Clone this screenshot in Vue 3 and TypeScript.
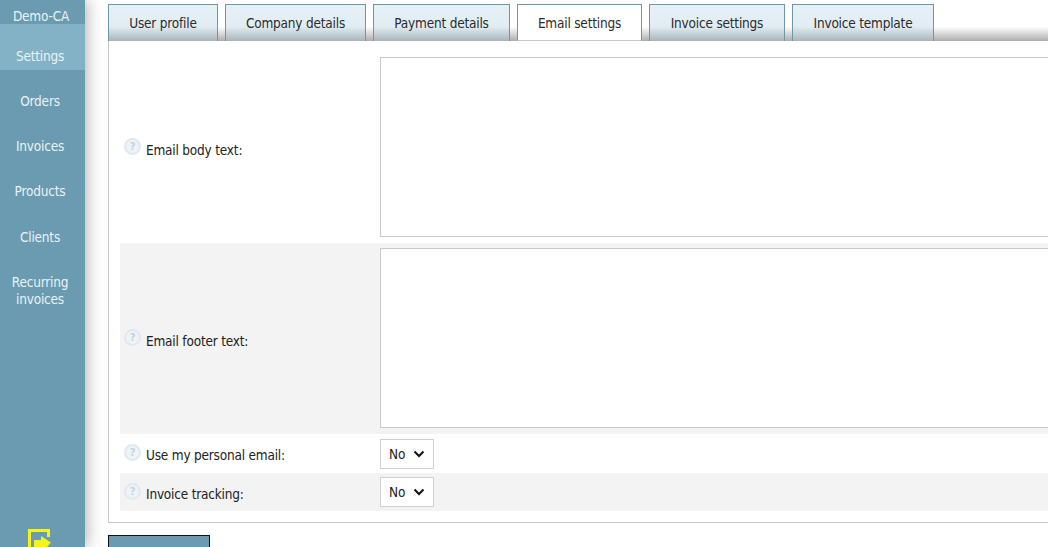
<script setup lang="ts">
interface Tab {
  label: string
  width: number
  active?: boolean
}

const navItems = ['Orders', 'Invoices', 'Products', 'Clients']

const tabs: Tab[] = [
  { label: 'User profile', width: 110 },
  { label: 'Company details', width: 141 },
  { label: 'Payment details', width: 137 },
  { label: 'Email settings', width: 125, active: true },
  { label: 'Invoice settings', width: 136 },
  { label: 'Invoice template', width: 142 }
]
</script>

<template>
  <div class="page">
    <aside class="sidebar">
      <div class="account">Demo-CA</div>
      <a class="nav-item current">Settings</a>
      <a v-for="item in navItems" :key="item" class="nav-item">{{ item }}</a>
      <a class="nav-item double">Recurring<br />invoices</a>
      <div class="logout">
        <svg width="24" height="18" viewBox="0 0 24 18">
          <path d="M1.500 18V1.500H20.500V8" fill="none" stroke="#f4f41c" stroke-width="3" />
          <path d="M6 11h7V7l10 6.500L19 18H6z" fill="#f4f41c" />
        </svg>
      </div>
    </aside>

    <main class="content">
      <div class="tabbar">
        <div
          v-for="tab in tabs"
          :key="tab.label"
          class="tab"
          :class="{ active: tab.active }"
          :style="{ width: tab.width + 'px' }"
        >
          {{ tab.label }}
        </div>
      </div>

      <div class="panel">
        <div class="row tall first">
          <div class="label">
            <span class="help">?</span>
            <span class="label-text">Email body text:</span>
          </div>
          <textarea class="area"></textarea>
        </div>
        <div class="row tall shaded">
          <div class="label">
            <span class="help">?</span>
            <span class="label-text">Email footer text:</span>
          </div>
          <textarea class="area"></textarea>
        </div>
        <div class="row short">
          <div class="label">
            <span class="help">?</span>
            <span class="label-text">Use my personal email:</span>
          </div>
          <div class="select">
            No
            <svg width="12" height="8" viewBox="0 0 12 8">
              <path d="M1.500 1.500 6 6l4.500-4.500" fill="none" stroke="#111" stroke-width="2" />
            </svg>
          </div>
        </div>
        <div class="row short last shaded">
          <div class="label">
            <span class="help">?</span>
            <span class="label-text">Invoice tracking:</span>
          </div>
          <div class="select">
            No
            <svg width="12" height="8" viewBox="0 0 12 8">
              <path d="M1.500 1.500 6 6l4.500-4.500" fill="none" stroke="#111" stroke-width="2" />
            </svg>
          </div>
        </div>
      </div>

      <button class="save" type="button"></button>
    </main>
  </div>
</template>

<style>
html,
body {
  margin: 0;
  overflow: hidden;
  background: #fff;
}
</style>

<style scoped>
.page {
  display: flex;
  width: 1048px;
  height: 547px;
  overflow: hidden;
  font-family: "DejaVu Sans", "Liberation Sans", sans-serif;
  font-stretch: condensed;
  font-size: 13.500px;
  letter-spacing: -0.2px;
}

.sidebar {
  flex: none;
  position: relative;
  display: flex;
  flex-direction: column;
  width: 85px;
  box-sizing: border-box;
  padding-right: 5px;
  background: #6a9bb0;
  color: #e9f2f5;
  text-align: center;
  box-shadow: 3px 0 14px rgba(0, 0, 0, 0.28);
}

.account {
  height: 24px;
  line-height: 32px;
  margin-right: -2px;
}

.nav-item {
  display: block;
  height: 45.200px;
  line-height: 45px;
}

.nav-item.current {
  height: 46px;
  line-height: 64px;
  margin-right: -5px;
  padding-right: 5px;
  background: #83b2c6;
}

.current + .nav-item {
  margin-top: 9px;
}

.nav-item.double {
  height: auto;
  padding-top: 14px;
  line-height: 17px;
}

.logout {
  margin-top: auto;
  height: 18px;
  padding-left: 0;
  overflow: hidden;
}

.content {
  flex: none;
  width: 963px;
  padding-left: 23px;
  box-sizing: border-box;
}

.tabbar {
  display: flex;
  gap: 7px;
  height: 41px;
  padding-top: 4px;
  box-sizing: border-box;
  width: 940px;
  background: linear-gradient(rgba(0, 0, 0, 0) 65%, rgba(0, 0, 0, 0.32) 100%);
}

.tab {
  flex: none;
  box-sizing: border-box;
  height: 37px;
  line-height: 37px;
  text-align: center;
  color: #2b2b2b;
  border: 1px solid #6f97a8;
  border-bottom: 0;
  background: linear-gradient(#e5f1f7 0, #e1edf3 60%, #a8b6bb 100%);
}

.tab.active {
  background: #fff;
  border-bottom: 1px solid #c8c8c8;
}

.panel {
  width: 1000px;
  padding: 0 0 11px 11px;
  border-left: 1px solid #c8c8c8;
  border-bottom: 1px solid #c8c8c8;
  height: 482px;
  box-sizing: border-box;
}

.row {
  display: flex;
  align-items: center;
  color: #222;
}

.row.tall {
  height: 191px;
  padding: 5px 0 6px;
  box-sizing: border-box;
}

.row.tall.first {
  height: 202px;
  padding-top: 16px;
}

.tall .label {
  padding-top: 4px;
}

.tall .help {
  margin-top: -2px;
}

.row.short {
  height: 39px;
}

.row.last {
  height: 38px;
}

.short .label {
  padding-top: 4px;
}

.short .help {
  margin-top: -4px;
}

.short .label-text {
  margin-top: -1px;
}

.shaded {
  background: #f3f3f3;
}

.label {
  display: flex;
  align-items: flex-start;
  flex: none;
  width: 260px;
  padding-left: 4px;
  box-sizing: border-box;
}

.help {
  flex: none;
  width: 13px;
  height: 13px;
  margin: -3px 5px 0 0;
  border: 2px solid #dfe9f0;
  border-radius: 50%;
  background: #eef3f7;
  color: #c3d3de;
  font-size: 11px;
  font-weight: bold;
  line-height: 13px;
  text-align: center;
}

.label-text {
  line-height: 16px;
  margin-top: 2px;
}

.area {
  display: block;
  flex: none;
  width: 700px;
  height: 180px;
  padding: 0;
  box-sizing: border-box;
  border: 1px solid #c8c8c8;
  background: #fff;
  outline: none;
  resize: none;
}

.select {
  display: flex;
  align-items: center;
  justify-content: space-between;
  flex: none;
  box-sizing: border-box;
  width: 54px;
  height: 30px;
  padding: 0 8px;
  border: 1px solid #d0d0d0;
  background: #fff;
  color: #222;
}

.save {
  display: block;
  width: 102px;
  height: 30px;
  margin-top: 12px;
  padding: 0;
  background: #6a9bb0;
  border: 1px solid #111;
}
</style>
